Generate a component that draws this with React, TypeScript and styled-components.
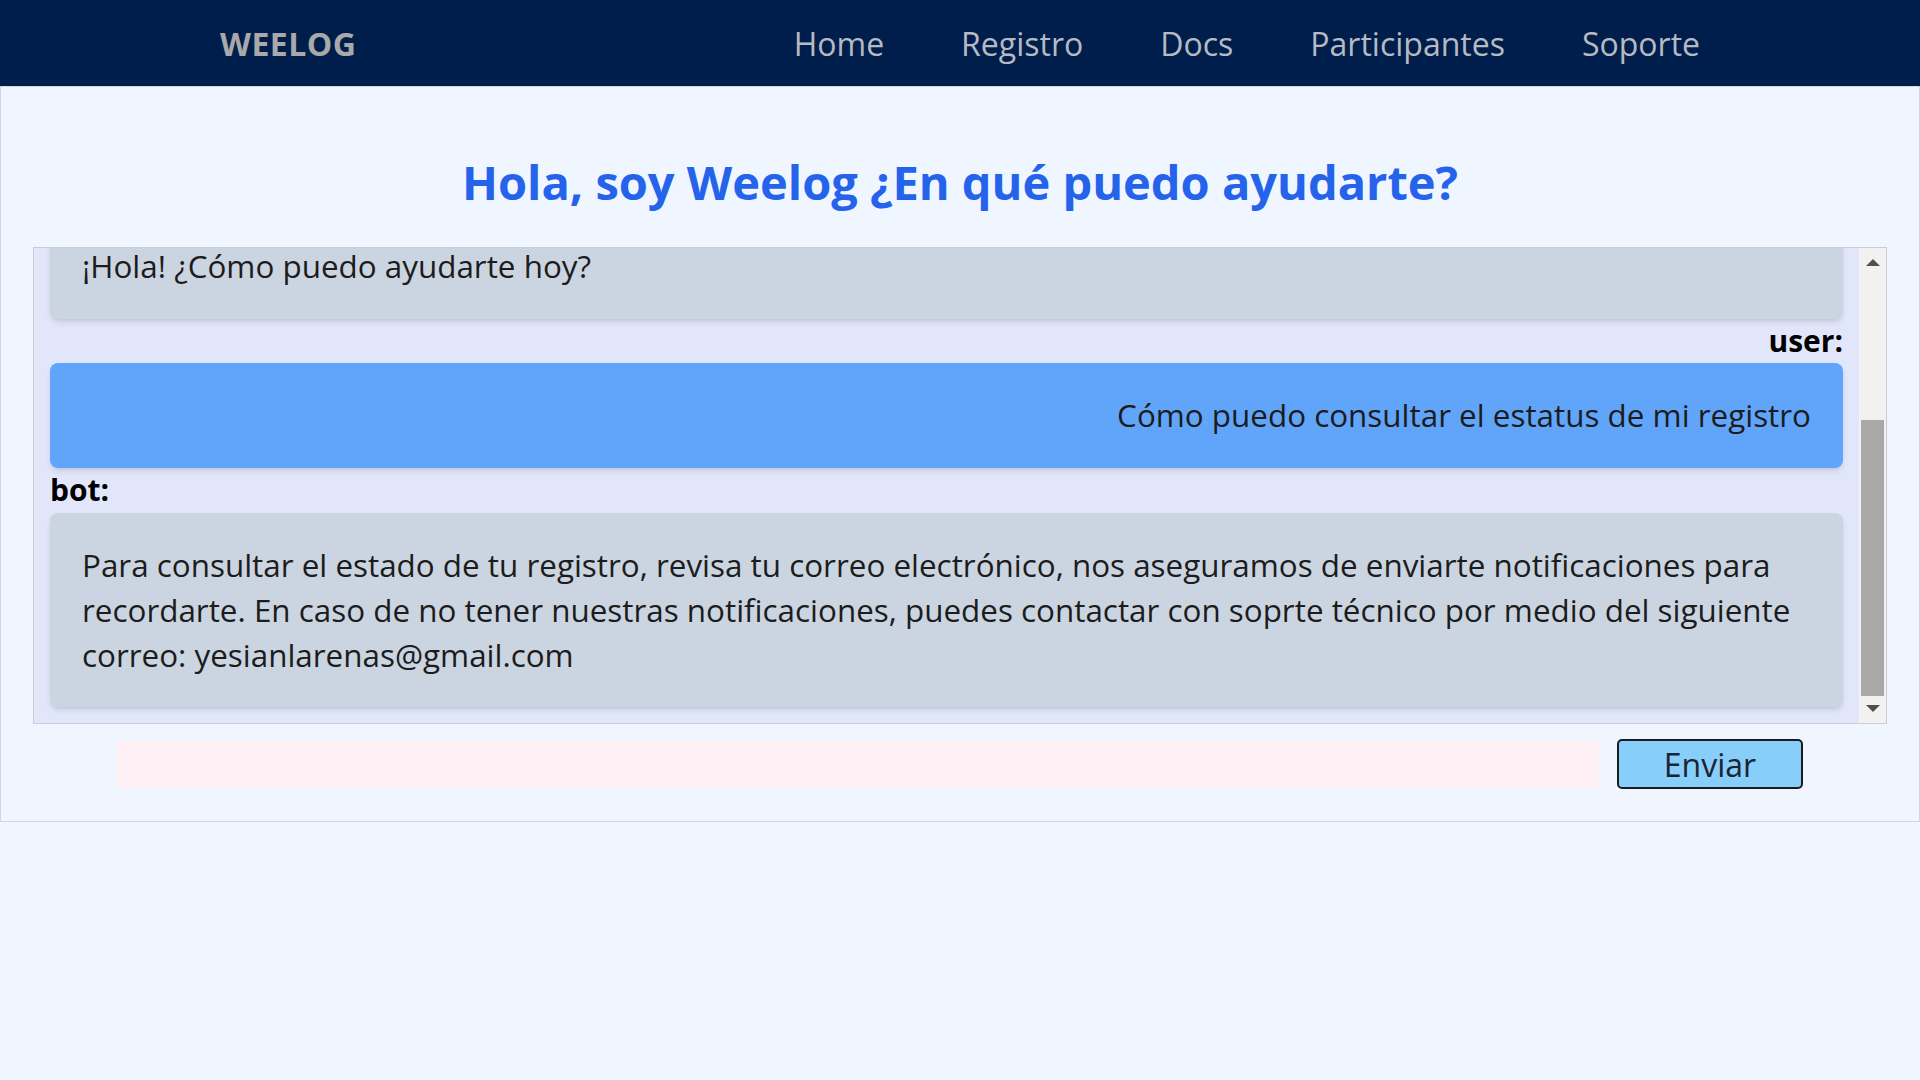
import React, { useLayoutEffect, useRef } from "react";
import styled, { createGlobalStyle } from "styled-components";

const FONT = `"Open Sans", "Liberation Sans", sans-serif`;

const GlobalStyle = createGlobalStyle`
  html, body {
    margin: 0;
    padding: 0;
    background: #eff6ff;
    font-family: ${FONT};
  }
  * { box-sizing: border-box; }
`;

const NavBar = styled.nav`
  height: 86px;
  background: #001e4b;
  display: flex;
  align-items: center;
  justify-content: space-between;
  padding: 0 220px;
`;

const Brand = styled.div`
  color: #a9a9a9;
  font-weight: 700;
  font-size: 32px;
  letter-spacing: 0.5px;
`;

const NavLinks = styled.ul`
  display: flex;
  gap: 77px;
  list-style: none;
  margin: 0;
  padding: 0;
`;

const NavLink = styled.li`
  color: #b6bac3;
  font-size: 32px;
  font-weight: 400;
`;

const Main = styled.main`
  background: #eff6ff;
  border: 1px solid #d3d7dd;
  padding: 0 32px 32px;
  display: flex;
  flex-direction: column;
`;

const Title = styled.h1`
  margin: 68px 0 38px;
  text-align: center;
  color: #2563eb;
  font-size: 47px;
  line-height: 54px;
  font-weight: 700;
`;

const ChatBox = styled.div`
  height: 477px;
  display: flex;
  background: #e2e6fb;
  border: 1px solid #c9ccd2;
`;

const MessageList = styled.div`
  flex: 1;
  min-width: 0;
  overflow-y: auto;
  scrollbar-width: none;
  padding: 16px 16px 16px;
  &::-webkit-scrollbar { display: none; }
`;

const ScrollTrack = styled.div`
  width: 27px;
  flex: none;
  background: #f1f1f1;
  display: flex;
  flex-direction: column;
`;

const ScrollArrow = styled.div<{ $dir: "up" | "down" }>`
  height: 27px;
  display: flex;
  align-items: center;
  justify-content: center;

  &::before {
    content: "";
    width: 0;
    height: 0;
    border-left: 7px solid transparent;
    border-right: 7px solid transparent;
    ${(p) =>
      p.$dir === "up"
        ? "border-bottom: 7px solid #505050; margin-top: 2px;"
        : "border-top: 7px solid #505050; margin-bottom: 2px;"}
  }
`;

const ThumbArea = styled.div`
  flex: 1;
  display: flex;
  flex-direction: column;
  justify-content: flex-end;
  padding: 0 2px;
`;

const Thumb = styled.div<{ $h: number }>`
  height: ${(p) => p.$h}px;
  background: #a8a8a8;
`;

const Sender = styled.div<{ $side: "left" | "right" }>`
  font-weight: 700;
  font-size: 30px;
  line-height: 44.8px;
  color: #000;
  text-align: ${(p) => p.$side};
`;

const Bubble = styled.div<{ $from: "bot" | "user" }>`
  background: ${(p) => (p.$from === "user" ? "#60a5fa" : "#cbd5e1")};
  text-align: ${(p) => (p.$from === "user" ? "right" : "left")};
  color: #1c1c1c;
  font-size: 31.4px;
  line-height: 44.8px;
  padding: 30px 32px;
  border-radius: 8px;
  box-shadow: 0 4px 6px -1px rgba(0, 0, 0, 0.1), 0 2px 4px -2px rgba(0, 0, 0, 0.1);
`;

const InputRow = styled.form`
  display: flex;
  justify-content: center;
  align-items: center;
  gap: 18px;
  margin-top: 15px;
`;

const TextInput = styled.input`
  width: 1482px;
  height: 47px;
  border: none;
  outline: none;
  background: #fff0f5;
  font-family: ${FONT};
  font-size: 26px;
  padding: 0 12px;
`;

const SendButton = styled.button`
  width: 186px;
  height: 50px;
  background: #87cefa;
  border: 2px solid #1b1b1b;
  border-radius: 5px;
  font-family: ${FONT};
  font-size: 32px;
  color: #1a2433;
  cursor: pointer;
  padding: 0;
`;

const messages: { from: "bot" | "user"; text: string }[] = [
  { from: "bot", text: "¡Hola! ¿Cómo puedo ayudarte hoy?" },
  { from: "user", text: "Cómo puedo consultar el estatus de mi registro" },
  {
    from: "bot",
    text:
      "Para consultar el estado de tu registro, revisa tu correo electrónico, nos aseguramos de enviarte notificaciones para recordarte. En caso de no tener nuestras notificaciones, puedes contactar con soprte técnico por medio del siguiente correo: yesianlarenas@gmail.com",
  },
];

export default function App() {
  const listRef = useRef<HTMLDivElement>(null);
  useLayoutEffect(() => {
    if (listRef.current) listRef.current.scrollTop = listRef.current.scrollHeight;
  }, []);

  return (
    <>
      <GlobalStyle />
      <NavBar>
        <Brand>WEELOG</Brand>
        <NavLinks>
          {["Home", "Registro", "Docs", "Participantes", "Soporte"].map((l) => (
            <NavLink key={l}>{l}</NavLink>
          ))}
        </NavLinks>
      </NavBar>
      <Main>
        <Title>Hola, soy Weelog ¿En qué puedo ayudarte?</Title>
        <ChatBox>
          <MessageList ref={listRef}>
            {messages.map((m, i) => (
              <React.Fragment key={i}>
                <Sender $side={m.from === "user" ? "right" : "left"}>{m.from}:</Sender>
                <Bubble $from={m.from}>{m.text}</Bubble>
              </React.Fragment>
            ))}
          </MessageList>
          <ScrollTrack aria-hidden>
            <ScrollArrow $dir="up" />
            <ThumbArea>
              <Thumb $h={276} />
            </ThumbArea>
            <ScrollArrow $dir="down" />
          </ScrollTrack>
        </ChatBox>
        <InputRow onSubmit={(e) => e.preventDefault()}>
          <TextInput type="text" />
          <SendButton type="submit">Enviar</SendButton>
        </InputRow>
      </Main>
    </>
  );
}
